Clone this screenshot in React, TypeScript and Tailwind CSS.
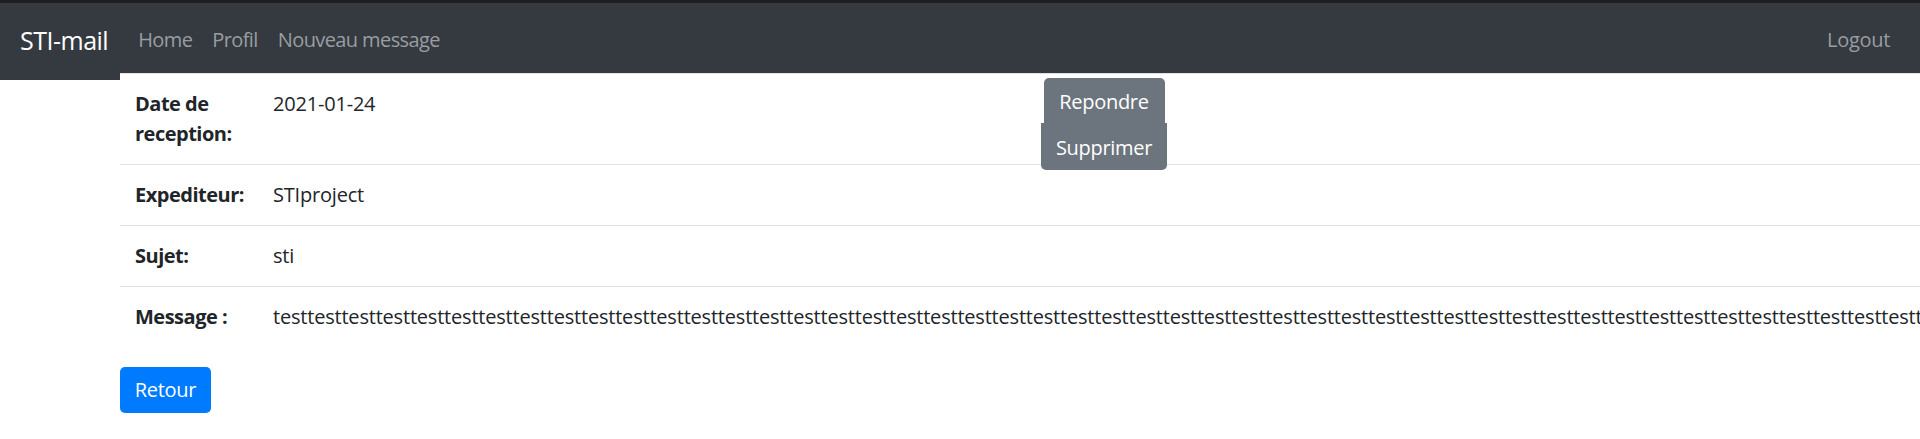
import React from "react";

const font = { fontFamily: '"Open Sans", "Noto Sans", sans-serif' };

interface Row {
  label: string;
  value: string;
}

const rows: Row[] = [
  { label: "Date de reception:", value: "2021-01-24" },
  { label: "Expediteur:", value: "STIproject" },
  { label: "Sujet:", value: "sti" },
  { label: "Message :", value: "test".repeat(90) },
];

function Navbar() {
  return (
    <nav className="h-[80px] border-t-[3px] border-[#1f1f1f] bg-[#343a40] flex items-start pt-[18px] px-[20px]">
      <a className="text-[25px] leading-[38px] text-white mr-[20px] tracking-[-0.5px]">STI-mail</a>
      <ul className="flex items-center h-[38px]">
        {["Home", "Profil", "Nouveau message"].map((l) => (
          <li key={l} className="px-[10px] text-[20px] text-[#9a9da0] tracking-[-0.6px]">
            {l}
          </li>
        ))}
      </ul>
      <div className="ml-auto h-[38px] flex items-center px-[10px] text-[20px] text-[#9a9da0] tracking-[-0.3px]">
        Logout
      </div>
    </nav>
  );
}

export default function App() {
  return (
    <div className="relative min-h-[439px] bg-white overflow-hidden text-[#212529]" style={font}>
      <Navbar />

      {/* message details */}
      <main className="relative -mt-[7px] ml-[120px] bg-white">
        {rows.map((r) => (
          <div key={r.label} className="flex border-t border-[#dee2e6]">
            <div className="w-[138px] shrink-0 p-[15px] text-[20px] leading-[30px] font-bold tracking-[-0.5px]">
              {r.label}
            </div>
            <div className="p-[15px] text-[20px] leading-[30px] whitespace-nowrap tracking-[-0.2px]">
              {r.value}
            </div>
          </div>
        ))}
        <button className="mt-[20px] w-[91px] h-[46px] rounded-[5px] bg-[#007bff] text-white text-[20px] tracking-[-0.3px]">
          Retour
        </button>
      </main>

      {/* action buttons */}
      <div className="absolute left-[1041px] top-[78px] w-[126px] flex flex-col items-center">
        <button className="w-[121px] h-[45px] pt-[3px] rounded-t-[5px] bg-[#6c757d] text-white text-[20px] tracking-[-0.3px]">
          Repondre
        </button>
        <button className="w-[126px] h-[47px] pt-[3px] rounded-b-[5px] bg-[#6c757d] text-white text-[20px] tracking-[-0.3px]">
          Supprimer
        </button>
      </div>
    </div>
  );
}
